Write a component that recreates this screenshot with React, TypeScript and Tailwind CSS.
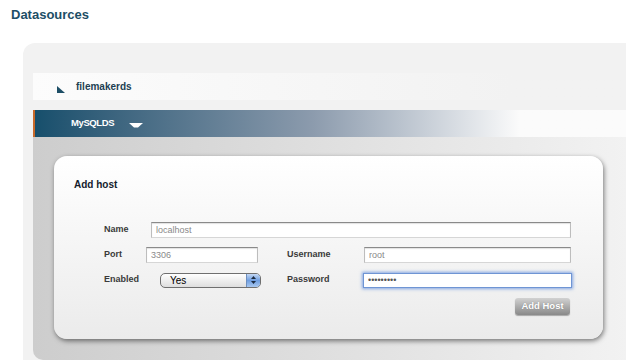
import React from 'react'

const baseCls =
  'bg-white px-[4px] text-[9px] outline-none font-["Liberation_Sans",sans-serif]'
const inputCls = `${baseCls} h-[16px] border border-[#bdbdbd] border-t-[#8a8a8a] border-b-[#d6d6d6] shadow-[inset_0_1px_1px_rgba(0,0,0,0.12)] text-[#8a8a8a]`

function Label({ children, w }: { children: React.ReactNode; w: string }) {
  return <span className={`${w} shrink-0 text-[9px] font-bold text-[#3a3a3a]`}>{children}</span>
}

export default function App() {
  return (
    <div className='w-[626px] h-[361px] overflow-hidden bg-white font-["Liberation_Sans",Arial,sans-serif]'>
      <h1 className="pt-[7px] pl-[11px] text-[13px] leading-[16px] font-bold text-[#1d4e66]">Datasources</h1>

      <div className="mt-[20px] ml-[23px] rounded-tl-[12px] bg-[#f2f2f2] pt-[30px] pl-[10px]">
        {/* collapsed datasource */}
        <div className="h-[27px] flex items-center bg-gradient-to-r from-[#fcfcfc] to-[#f2f2f2] to-[81%]">
          <svg width="8" height="7" viewBox="0 0 8 7" className="ml-[24px] mt-[5px]">
            <polygon points="0,0 0,7 8,7" fill="#1d4e66" />
          </svg>
          <span className="ml-[11px] text-[10px] font-bold text-[#1d3f52]">filemakerds</span>
        </div>

        {/* expanded datasource */}
        <div className="mt-[10px] h-[27px] flex items-center border-l-[2px] border-[#c8692a] bg-gradient-to-r from-[#164f6c] via-[#8c9bad] via-[47%] to-[#fbfbfb] to-[82%]">
          <span className="ml-[36px] text-[9.5px] font-bold text-white tracking-[-0.4px]">MySQLDS</span>
          <svg width="14" height="5" viewBox="0 0 14 5" className="ml-[15px] mt-[4px]">
            <polygon points="0,0 14,0 9,4.5 5,4.5" fill="#ffffff" />
          </svg>
        </div>

        <div className="rounded-bl-[10px] bg-gradient-to-r from-[#cdcdcd] to-[#f2f2f2] pt-[19px] pl-[21px] pr-[23px] pb-[21px]">
          <div className="h-[183px] rounded-[13px] bg-gradient-to-b from-white to-[#ebebeb] shadow-[1px_2px_5px_rgba(0,0,0,0.5)] pt-[23px] pl-[20px] pr-[32px]">
            <h2 className="text-[10px] leading-[12px] font-bold text-[#141c2c]">Add host</h2>

            <div className="ml-[30px] mt-[31px] flex flex-col gap-[9px]">
              <div className="h-[16px] flex items-center">
                <Label w="w-[47px]">Name</Label>
                <input className={`${inputCls} flex-1`} defaultValue="localhost" />
              </div>
              <div className="h-[16px] flex items-center">
                <Label w="w-[42px]">Port</Label>
                <input className={`${inputCls} w-[112px]`} defaultValue="3306" />
                <span className="w-[29px]" />
                <Label w="w-[77px]">Username</Label>
                <input className={`${inputCls} flex-1`} defaultValue="root" />
              </div>
              <div className="h-[16px] flex items-center">
                <Label w="w-[56px]">Enabled</Label>
                <div className="w-[101px] h-[15px] flex items-center rounded-[5px] border border-[#6f6f6f] bg-gradient-to-b from-white to-[#dedede] overflow-hidden">
                  <span className="ml-[9px] flex-1 text-[10px] text-black">Yes</span>
                  <div className="w-[14px] h-full flex flex-col items-center justify-center gap-[2px] bg-gradient-to-b from-[#c4d8f4] via-[#6f9ee0] to-[#a8c8f0] border-l border-[#6d8fbf]">
                    <svg width="5" height="3" viewBox="0 0 5 3"><polygon points="2.5,0 5,3 0,3" fill="#1b2a40" /></svg>
                    <svg width="5" height="3" viewBox="0 0 5 3"><polygon points="0,0 5,0 2.5,3" fill="#1b2a40" /></svg>
                  </div>
                </div>
                <span className="w-[26px]" />
                <Label w="w-[76px]">Password</Label>
                <input
                  type="password"
                  className={`${baseCls} flex-1 h-[15px] border border-[#6f95d4] shadow-[0_0_3px_1px_rgba(95,140,220,0.75)] text-[#555] text-[6px] mr-[-1px]`}
                  defaultValue="secretpw1"
                />
              </div>
            </div>

            <div className="mt-[10px] flex justify-end">
              <button className="w-[55px] h-[17px] rounded-[3px] bg-gradient-to-b from-[#d2d2d2] to-[#898989] text-[9.5px] font-bold text-white [text-shadow:0_0_1px_rgba(0,0,0,0.3)] shadow-[0_1px_1px_rgba(0,0,0,0.3)] mr-[1px]">
                Add Host
              </button>
            </div>
          </div>
        </div>
      </div>
    </div>
  )
}
